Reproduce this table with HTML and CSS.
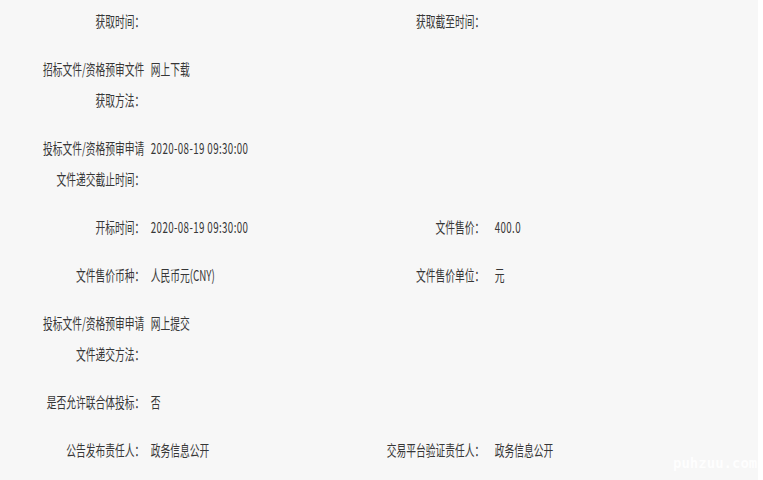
FILE: index.html
```html
<!DOCTYPE html>
<html lang="zh-CN">
<head>
<meta charset="utf-8">
<title>招标信息</title>
<link rel="stylesheet" href="styles.css">
</head>
<body>
<div class="page">
  <div class="sheet">
    <div class="row">
      <div class="lbl">获取时间<span class="colon">：</span></div><div class="val"></div>
      <div class="lbl lbl-r">获取截至时间<span class="colon">：</span></div><div class="val val-r"></div>
    </div>
    <div class="row">
      <div class="lbl">招标文件/资格预审文件<br>获取方法<span class="colon">：</span></div><div class="val">网上下载</div>
    </div>
    <div class="row">
      <div class="lbl">投标文件/资格预审申请<br>文件递交截止时间<span class="colon">：</span></div><div class="val num">2020-08-19 09:30:00</div>
    </div>
    <div class="row">
      <div class="lbl">开标时间<span class="colon">：</span></div><div class="val num">2020-08-19 09:30:00</div>
      <div class="lbl lbl-r">文件售价<span class="colon">：</span></div><div class="val val-r num">400.0</div>
    </div>
    <div class="row">
      <div class="lbl">文件售价币种<span class="colon">：</span></div><div class="val">人民币元(CNY)</div>
      <div class="lbl lbl-r">文件售价单位<span class="colon">：</span></div><div class="val val-r">元</div>
    </div>
    <div class="row">
      <div class="lbl">投标文件/资格预审申请<br>文件递交方法<span class="colon">：</span></div><div class="val">网上提交</div>
    </div>
    <div class="row">
      <div class="lbl">是否允许联合体投标<span class="colon">：</span></div><div class="val">否</div>
    </div>
    <div class="row">
      <div class="lbl">公告发布责任人<span class="colon">：</span></div><div class="val">政务信息公开</div>
      <div class="lbl lbl-r">交易平台验证责任人<span class="colon">：</span></div><div class="val val-r">政务信息公开</div>
    </div>
  </div>
  <div class="watermark">puhzuu.com</div>
</div>
</body>
</html>
```

FILE: styles.css
```css
html, body {
  margin: 0;
  padding: 0;
  background: #ffffff;
  overflow: hidden;
}

.page {
  position: relative;
  width: 763px;
  height: 480px;
  overflow: hidden;
}

.sheet {
  width: 1166px;
  height: 500px;
  margin-top: -4px;
  background: #f7f7f7;
  transform: scaleX(0.65);
  transform-origin: 0 0;
  font-family: "Noto Sans CJK SC", "Microsoft YaHei", sans-serif;
  font-size: 15px;
  line-height: 31px;
  color: #363636;
}

.row {
  display: grid;
  grid-template-columns: 222px 303px 206px 1fr;
  column-gap: 10px;
  padding: 8.5px 0;
}

.lbl {
  text-align: right;
  white-space: nowrap;
}

.colon {
  font-family: "Noto Sans CJK JP", "Noto Sans CJK SC", sans-serif;
}

.lbl-r {
  padding-right: 6px;
}

.val {
  white-space: nowrap;
}

.num {
  letter-spacing: 0.6px;
}

.watermark {
  position: absolute;
  left: 673px;
  top: 455px;
  font-family: "DejaVu Sans Mono", monospace;
  font-weight: bold;
  font-size: 14px;
  line-height: 17px;
  color: #ffffff;
  opacity: 0.9;
  white-space: nowrap;
}
```
